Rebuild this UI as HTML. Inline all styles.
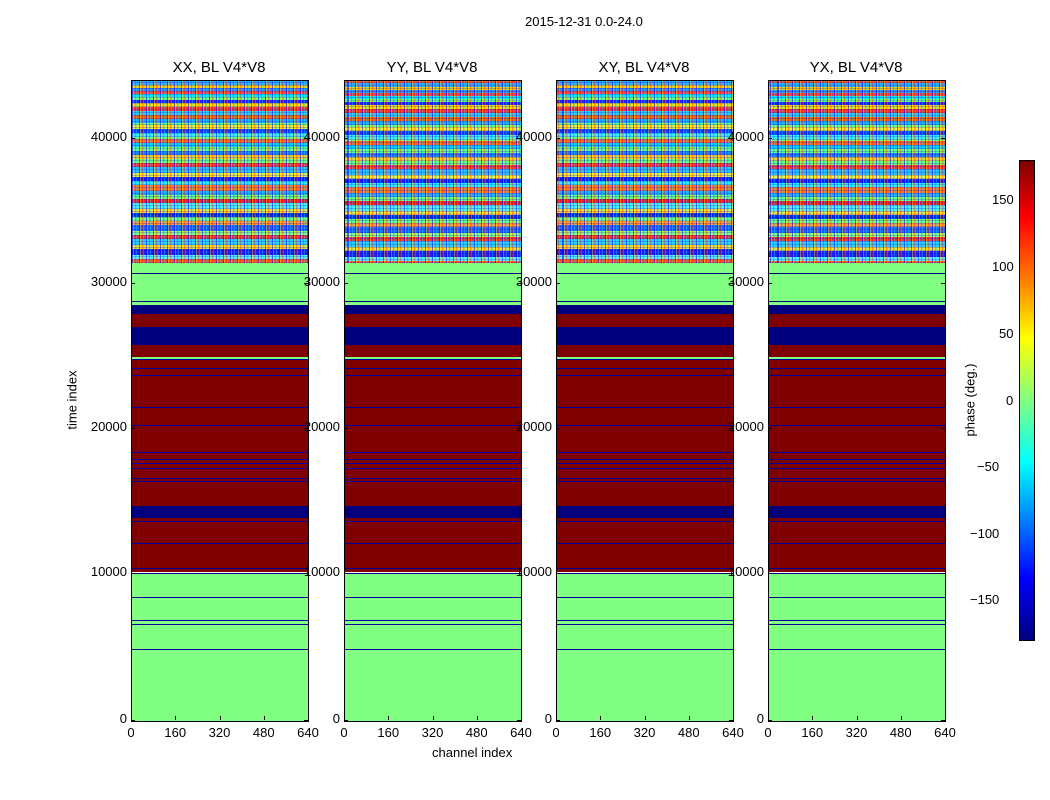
<!DOCTYPE html>
<html><head><meta charset="utf-8"><style>
body{margin:0;background:#fff;width:1050px;height:800px;position:relative;overflow:hidden;font-family:"Liberation Sans",sans-serif;color:#000}
.t{position:absolute;font-size:13px;white-space:nowrap}
.p{position:absolute;top:80px;width:176px;height:640px;border:1px solid #000;box-sizing:content-box;overflow:hidden}
.n{position:absolute;left:0;top:0;width:100%;height:182px;
background:
repeating-linear-gradient(90deg,rgba(0,0,255,.5) 0 1px,rgba(255,230,0,.4) 1px 2px,transparent 2px 3px,rgba(255,0,0,.3) 3px 4px,rgba(0,220,255,.35) 4px 5px,transparent 5px 7px),
repeating-linear-gradient(0deg,rgba(0,0,200,.25) 0 1px,transparent 1px 3px),
linear-gradient(180deg,#3af 0 4px,#fc0 4px 7px,#38f 7px 10px,#f44 10px 13px,#0ef 13px 16px,#7f7 16px 19px,#22f 19px 22px,#fd0 22px 26px,#f33 26px 30px,#3cf 30px 34px,#e60 34px 38px,#2af 38px 42px,#7f7 42px 44px,#fe2 44px 48px,#14f 48px 52px,#4ef 52px 56px,#7f7 56px 58px,#f62 58px 62px,#0cf 62px 66px,#7f7 66px 70px,#27f 70px 74px,#fc2 74px 78px,#7f7 78px 82px,#f33 82px 86px,#3bf 86px 92px,#fe3 92px 96px,#12f 96px 100px,#3ef 100px 104px,#f72 104px 110px,#2af 110px 114px,#7f7 114px 118px,#e22 118px 122px,#5ef 122px 128px,#fd3 128px 132px,#03d 132px 136px,#7f7 136px 140px,#f93 140px 144px,#26f 144px 150px,#9f7 150px 154px,#e33 154px 158px,#3cf 158px 164px,#fd2 164px 168px,#22e 168px 174px,#6ef 174px 178px,#f52 178px 182px)}
.b{position:absolute;left:0;top:182px;width:100%;height:458px;background:linear-gradient(180deg,
#80ff80 0 10px,#00007f 10px 11px,#80ff80 11px 38px,#00007f 38px 39px,#80ff80 39px 42px,#00007f 42px 51px,#7f0000 51px 64px,#00007f 64px 82px,#7f0000 82px 94px,#80ff80 94px 96px,#7f0000 96px 243px,#00007f 243px 255px,#7f0000 255px 309px,#fff 309px 310px,#00007f 310px 311px,#80ff80 311px 458px)}
.l{position:absolute;left:0;width:100%;height:1px;background:#0000a0}
</style></head><body>
<div class="t" style="left:525px;top:14px">2015-12-31 0.0-24.0</div>
<div class="t" style="left:432px;top:745px">channel index</div>
<div class="t" style="top:400px;transform:translate(-50%,-50%) rotate(-90deg);left:72px">time index</div>
<div class="t" style="left:970px;top:400px;transform:translate(-50%,-50%) rotate(-90deg)">phase (deg.)</div>

<div id="panels"></div>
<script>
var xs=[131,344,556,768],ts=["XX","YY","XY","YX"],h="";
var lines=[358,367,374,406,424,451,458,462,467,477,480,520,542,567,596,619,623,648];
for(var i=0;i<4;i++){var x=xs[i];
h+='<div class="t" style="font-size:15px;left:'+(x+88)+'px;top:59px;transform:translateX(-50%)">'+ts[i]+', BL V4*V8</div>';
h+='<div class="p" style="left:'+x+'px"><div class="n" style="background-position:'+(i*3)+'px 0,0 0,0 '+(i%2?2:0)+'px"></div><div class="b"></div>';
lines.forEach(function(y){h+='<div class="l" style="top:'+(y-80)+'px"></div>'});
h+='</div>';
[["0",720],["10000",573],["20000",428],["30000",283],["40000",138]].forEach(function(a){
h+='<div class="t" style="right:'+(1050-x+4)+'px;top:'+(a[1]-9)+'px">'+a[0]+'</div>';
h+='<div style="position:absolute;left:'+x+'px;top:'+a[1]+'px;width:4px;height:1px;background:#000"></div>';
h+='<div style="position:absolute;left:'+(x+173)+'px;top:'+a[1]+'px;width:4px;height:1px;background:#000"></div>';});
[0,160,320,480,640].forEach(function(v,k){var px=x+k*44.25;
h+='<div class="t" style="left:'+px+'px;top:725px;transform:translateX(-50%)">'+v+'</div>';
h+='<div style="position:absolute;left:'+px+'px;top:716px;width:1px;height:4px;background:#000"></div>';});
}
document.getElementById('panels').innerHTML=h;
</script>
<div style="position:absolute;left:1019px;top:160px;width:14px;height:479px;border:1px solid #000;background:linear-gradient(180deg,#7f0000 0%,#ff0000 12%,#ff7f00 25%,#ffff00 37%,#80ff80 50%,#00ffff 63%,#007fff 75%,#0000ff 87%,#00007f 100%)"></div>
<div class="t" style="left:992px;top:192px">150</div>
<div class="t" style="left:992px;top:259px">100</div>
<div class="t" style="left:999px;top:326px">50</div>
<div class="t" style="left:1006px;top:393px">0</div>
<div class="t" style="left:977px;top:459px">−50</div>
<div class="t" style="left:970px;top:526px">−100</div>
<div class="t" style="left:970px;top:592px">−150</div>
</body></html>
